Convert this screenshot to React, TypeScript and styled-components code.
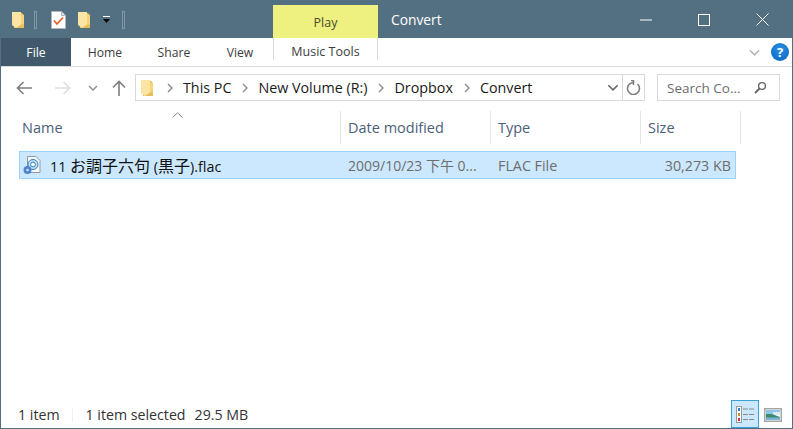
import React from "react";
import styled, { createGlobalStyle } from "styled-components";

const GlobalStyle = createGlobalStyle`
  html, body {
    margin: 0;
    padding: 0;
    background: #fff;
  }
  body {
    font-family: "Open Sans", "Noto Sans CJK JP", sans-serif;
  }
`;

const Window = styled.div`
  width: 793px;
  height: 429px;
  box-sizing: border-box;
  display: flex;
  flex-direction: column;
  background: #fff;
  border: 1px solid #536f82;
  border-top: 0;
  overflow: hidden;
`;

const TitleBar = styled.div`
  height: 38px;
  flex: none;
  background: #536f82;
  display: flex;
  align-items: flex-end;
  margin: 0 -1px;
`;

const QuickAccess = styled.div`
  width: 273px;
  height: 38px;
  display: flex;
  align-items: center;
  padding: 2px 0 0 11px;
  box-sizing: border-box;
`;

const QuickSep = styled.div<{ $left: number }>`
  width: 1px;
  height: 16px;
  margin-left: ${({ $left }) => $left}px;
  border: 1px solid #8496a2;
  background: #536f82;
`;

const IconSlot = styled.span<{ $left: number }>`
  display: flex;
  margin-left: ${({ $left }) => $left}px;
`;

const PlayTab = styled.div`
  width: 105px;
  height: 33px;
  background: #eef07f;
  color: #4b4b30;
  font-size: 12.5px;
  display: flex;
  align-items: center;
  justify-content: center;
  padding-top: 2px;
  box-sizing: border-box;
`;

const WindowTitle = styled.div`
  width: 240px;
  height: 38px;
  padding-left: 13px;
  box-sizing: border-box;
  line-height: 40px;
  color: #fff;
  font-size: 13.8px;
`;

const WindowControls = styled.div`
  flex: 1;
  height: 38px;
  display: flex;
  align-items: center;
  padding-top: 1px;
  box-sizing: border-box;
`;

const ControlSlot = styled.span<{ $left: number }>`
  display: flex;
  margin-left: ${({ $left }) => $left}px;
`;

const Ribbon = styled.div`
  height: 29px;
  flex: none;
  display: flex;
  align-items: stretch;
  border-bottom: 1px solid #dadbdc;
  box-sizing: border-box;
  font-size: 12.2px;
  color: #3c3c3c;
`;

const FileTab = styled.div`
  width: 70px;
  height: 28px;
  background: #415a6b;
  color: #fff;
  display: flex;
  align-items: center;
  justify-content: center;
`;

const RibbonTab = styled.div<{ $width: number }>`
  width: ${({ $width }) => $width}px;
  display: flex;
  align-items: center;
  justify-content: center;
`;

const ToolsTab = styled(RibbonTab)`
  margin-left: 2px;
  height: 22px;
  box-sizing: border-box;
  align-items: flex-start;
  line-height: 28px;
  font-size: 12.5px;
  border-left: 1px solid #dadbdc;
  border-right: 1px solid #dadbdc;
`;

const RibbonRight = styled.div`
  flex: 1;
  display: flex;
  align-items: center;
  justify-content: flex-end;
  gap: 10px;
  padding-right: 3px;
`;

const HelpBadge = styled.span`
  width: 18px;
  height: 18px;
  border-radius: 50%;
  background: radial-gradient(circle at 50% 35%, #2a8fe6, #0a62bd);
  color: #fff;
  font-size: 13px;
  font-weight: 700;
  line-height: 18px;
  text-align: center;
`;

const NavRow = styled.div`
  height: 27px;
  flex: none;
  display: flex;
  align-items: stretch;
  margin-top: 7px;
`;

const NavButtons = styled.div`
  width: 134px;
  display: flex;
  align-items: center;
  flex: none;
`;

const NavIcon = styled.span<{ $left: number }>`
  display: flex;
  margin-left: ${({ $left }) => $left}px;
`;

const AddressBox = styled.div`
  width: 510px;
  box-sizing: border-box;
  border: 1px solid #d9d9d9;
  display: flex;
  align-items: center;
  font-size: 14.3px;
  color: #1a1a1a;
`;

const Crumbs = styled.div`
  flex: 1;
  display: flex;
  align-items: center;
  padding-left: 4px;
`;

const Crumb = styled.span`
  margin-left: 10px;
  white-space: nowrap;
`;

const CrumbArrow = styled.span<{ $left: number }>`
  display: flex;
  margin-left: ${({ $left }) => $left}px;
`;

const AddressEnd = styled.div`
  height: 100%;
  width: 21px;
  border-left: 1px solid #d9d9d9;
  display: flex;
  align-items: center;
  justify-content: center;
`;

const AddressDrop = styled.span`
  display: flex;
  margin-right: 3px;
`;

const SearchBox = styled.div`
  width: 123px;
  margin-left: 12px;
  box-sizing: border-box;
  border: 1px solid #d9d9d9;
  display: flex;
  align-items: center;
  justify-content: space-between;
  padding: 0 12px 0 9px;
  font-size: 13.5px;
  color: #6d6d6d;
`;

const HeaderRow = styled.div`
  height: 33px;
  flex: none;
  margin-top: 10px;
  display: flex;
  font-size: 14.5px;
  color: #4c607a;
  position: relative;
`;

const HeaderCell = styled.div<{ $width: number }>`
  width: ${({ $width }) => $width}px;
  box-sizing: border-box;
  border-right: 1px solid #e5e5e5;
  padding: 8px 0 0 7px;
  line-height: 18px;
`;

const NameHeader = styled(HeaderCell)`
  padding-left: 21px;
`;

const SortCaret = styled.span`
  position: absolute;
  left: 171px;
  top: 1px;
  display: flex;
`;

const FileRow = styled.div`
  width: 717px;
  height: 28px;
  flex: none;
  margin: 7px 0 0 18px;
  box-sizing: border-box;
  display: flex;
  align-items: center;
  background: #cce8ff;
  border: 1px solid #99d1ff;
  font-size: 14.3px;
  color: #6d6d6d;
`;

const NameCell = styled.div`
  width: 328px;
  flex: none;
  display: flex;
  align-items: center;
  padding-left: 3px;
  box-sizing: border-box;
  color: #111;
  font-size: 14.3px;
  gap: 9px;
  white-space: nowrap;
`;

const CjkText = styled.span`
  font-size: 16px;
`;

const DateCell = styled.div`
  width: 150px;
  flex: none;
  font-size: 14px;
  white-space: nowrap;
`;

const TypeCell = styled.div`
  width: 100px;
  flex: none;
`;

const SizeCell = styled.div`
  flex: 1;
  text-align: right;
  padding-right: 4px;
`;

const Spacer = styled.div`
  flex: 1;
`;

const StatusBar = styled.div`
  height: 27px;
  flex: none;
  display: flex;
  align-items: center;
  padding-left: 17px;
  font-size: 14.2px;
  color: #333;
`;

const StatusItem = styled.span`
  white-space: nowrap;
`;

const StatusDivider = styled.span`
  width: 1px;
  height: 14px;
  background: #efefef;
  margin: 0 13px 0 12px;
`;

const StatusSize = styled.span`
  margin-left: 9px;
  white-space: nowrap;
`;

const ViewButtons = styled.div`
  margin-left: auto;
  margin-right: 6px;
  display: flex;
  align-items: flex-end;
  height: 27px;
`;

const ViewButton = styled.span<{ $active?: boolean }>`
  width: ${({ $active }) => ($active ? 28 : 27)}px;
  height: ${({ $active }) => ($active ? 28 : 27)}px;
  flex: none;
  box-sizing: border-box;
  display: flex;
  align-items: center;
  justify-content: center;
  background: ${({ $active }) => ($active ? "#cce8ff" : "transparent")};
  border: 1px solid ${({ $active }) => ($active ? "#3b9fd8" : "transparent")};
`;

const FolderIcon = () => (
  <svg width="14" height="18" viewBox="0 0 14 18">
    <path d="M3 2 H11 L13 4 V17 H3 Z" fill="#e9bd57" />
    <path d="M1 1 H10 V13.500 L5 17 L1 14 Z" fill="#fbe4a4" />
    <path d="M10 4 H13 V13.500 H10 Z" fill="#f5d376" />
  </svg>
);

const CheckDocIcon = () => (
  <svg width="15" height="18" viewBox="0 0 15 18">
    <path d="M.5.5 H10.500 L14.500 4.500 V17.500 H.5 Z" fill="#fff" stroke="#a9b4bb" />
    <path d="M10.500.5 V4.500 H14.500" fill="#dde3e7" stroke="#a9b4bb" />
    <path d="M3 9.500 L6 13 L12 6.500" fill="none" stroke="#e8602c" strokeWidth="1.8" />
  </svg>
);

const QuickDropIcon = () => (
  <svg width="9" height="8" viewBox="0 0 9 8">
    <path d="M1 .5 H8" stroke="#fff" strokeWidth="1" />
    <path d="M1 3 H8 L4.500 7 Z" fill="#000" />
  </svg>
);

const MinimizeIcon = () => (
  <svg width="12" height="2" viewBox="0 0 12 2">
    <path d="M0 1 H12" stroke="#fff" />
  </svg>
);

const MaximizeIcon = () => (
  <svg width="12" height="12" viewBox="0 0 12 12">
    <rect x=".5" y=".5" width="11" height="11" fill="none" stroke="#fff" />
  </svg>
);

const CloseIcon = () => (
  <svg width="13" height="13" viewBox="0 0 13 13">
    <path d="M.5.5 L12.500 12.500 M12.500.5 L.5 12.500" stroke="#fff" />
  </svg>
);

const Chevron = ({ color = "#8a8a8a", width = 10, height = 6 }: { color?: string; width?: number; height?: number }) => (
  <svg width={width} height={height} viewBox="0 0 10 6">
    <path d="M1 1 L5 5 L9 1" fill="none" stroke={color} strokeWidth="1.3" />
  </svg>
);

const ArrowIcon = ({ color, flip }: { color: string; flip?: boolean }) => (
  <svg width="16" height="14" viewBox="0 0 16 14" style={flip ? { transform: "scaleX(-1)" } : undefined}>
    <path d="M7.500 1 L1.500 7 L7.500 13 M1.500 7 H16" fill="none" stroke={color} strokeWidth="1.6" />
  </svg>
);

const UpArrowIcon = () => (
  <svg width="14" height="16" viewBox="0 0 14 16">
    <path d="M1 7.500 L7 1.500 L13 7.500 M7 1.500 V16" fill="none" stroke="#7e7e7e" strokeWidth="1.6" />
  </svg>
);

const CrumbChevron = () => (
  <svg width="6" height="10" viewBox="0 0 6 10">
    <path d="M1 1 L5 5 L1 9" fill="none" stroke="#8a8a8a" strokeWidth="1.4" />
  </svg>
);

const RefreshIcon = () => (
  <svg width="15" height="15" viewBox="0 0 15 15">
    <path d="M11.500 4 A6 6 0 1 1 7 2.500" fill="none" stroke="#7a7a7a" strokeWidth="1.5" />
    <path d="M5 .5 H7.500 V5" fill="none" stroke="#7a7a7a" strokeWidth="1.5" />
  </svg>
);

const SearchIcon = () => (
  <svg width="13" height="13" viewBox="0 0 13 13">
    <circle cx="8" cy="5" r="3.400" fill="none" stroke="#666" strokeWidth="1.4" />
    <path d="M5.500 7.500 L1 12" stroke="#666" strokeWidth="1.8" />
  </svg>
);

const CaretUpIcon = () => (
  <svg width="11" height="6" viewBox="0 0 11 6">
    <path d="M.5 5.500 L5.500 .8 L10.500 5.500" fill="none" stroke="#8a8a8a" />
  </svg>
);

const FlacIcon = () => (
  <svg width="18" height="19" viewBox="0 0 18 19">
    <path d="M4.500.5 H13 L17 4.500 V16.500 H4.500 Z" fill="#f7f9fb" stroke="#8f9aa4" />
    <circle cx="10" cy="8.500" r="5" fill="#bfe0f4" stroke="#2f7fbf" />
    <circle cx="10" cy="8.500" r="2.400" fill="#fff" stroke="#2f7fbf" />
    <circle cx="4.500" cy="14" r="4" fill="#4d84cb" />
    <circle cx="4.500" cy="14" r="1.300" fill="#cfe2f6" />
  </svg>
);

const DetailsViewIcon = () => (
  <svg width="19" height="17" viewBox="0 0 19 17">
    <rect x=".5" y=".5" width="5" height="16" fill="#fff" stroke="#9a9a9a" />
    <rect x="2" y="2" width="2" height="3" fill="#3a7fc0" />
    <rect x="2" y="7" width="2" height="3" fill="#c9902f" />
    <rect x="2" y="12" width="2" height="3" fill="#c8402f" />
    <path d="M7 3 H18 M7 8.500 H18 M7 13.500 H18" stroke="#8a8a8a" strokeDasharray="5 1" />
  </svg>
);

const PreviewViewIcon = () => (
  <svg width="18" height="14" viewBox="0 0 18 14">
    <rect x=".75" y=".75" width="16.500" height="12.500" fill="#fff" stroke="#a6a6a6" strokeWidth="1.500" />
    <rect x="2" y="2" width="14" height="4" fill="#8fc6ea" />
    <rect x="9" y="4" width="7" height="3" fill="#dcecf6" />
    <path d="M2 6 L8 6 L16 9 V10 H2 Z" fill="#3f8a6c" />
    <rect x="2" y="9.500" width="14" height="2.500" fill="#7ab4d6" />
  </svg>
);

const crumbs = ["This PC", "New Volume (R:)", "Dropbox", "Convert"];

const App = () => {
  return (
    <>
      <GlobalStyle />
      <Window>
        <TitleBar>
          <QuickAccess>
            <FolderIcon />
            <QuickSep $left={9} />
            <IconSlot $left={14}>
              <CheckDocIcon />
            </IconSlot>
            <IconSlot $left={11}>
              <FolderIcon />
            </IconSlot>
            <IconSlot $left={11}>
              <QuickDropIcon />
            </IconSlot>
            <QuickSep $left={11} />
          </QuickAccess>
          <PlayTab>Play</PlayTab>
          <WindowTitle>Convert</WindowTitle>
          <WindowControls>
            <ControlSlot $left={22}>
              <MinimizeIcon />
            </ControlSlot>
            <ControlSlot $left={46}>
              <MaximizeIcon />
            </ControlSlot>
            <ControlSlot $left={46}>
              <CloseIcon />
            </ControlSlot>
          </WindowControls>
        </TitleBar>

        <Ribbon>
          <FileTab>File</FileTab>
          <RibbonTab $width={68}>Home</RibbonTab>
          <RibbonTab $width={70}>Share</RibbonTab>
          <RibbonTab $width={62}>View</RibbonTab>
          <ToolsTab $width={105}>Music Tools</ToolsTab>
          <RibbonRight>
            <Chevron color="#b5b5b5" width={13} height={7} />
            <HelpBadge>?</HelpBadge>
          </RibbonRight>
        </Ribbon>

        <NavRow>
          <NavButtons>
            <NavIcon $left={15}>
              <ArrowIcon color="#7e7e7e" />
            </NavIcon>
            <NavIcon $left={23}>
              <ArrowIcon color="#dedede" flip />
            </NavIcon>
            <NavIcon $left={17}>
              <Chevron />
            </NavIcon>
            <NavIcon $left={14}>
              <UpArrowIcon />
            </NavIcon>
          </NavButtons>
          <AddressBox>
            <Crumbs>
              <FolderIcon />
              {crumbs.map((label, i) => (
                <React.Fragment key={label}>
                  <CrumbArrow $left={i === 0 ? 13 : 11}>
                    <CrumbChevron />
                  </CrumbArrow>
                  <Crumb>{label}</Crumb>
                </React.Fragment>
              ))}
            </Crumbs>
            <AddressDrop>
              <Chevron color="#666" width={12} height={7} />
            </AddressDrop>
            <AddressEnd>
              <RefreshIcon />
            </AddressEnd>
          </AddressBox>
          <SearchBox>
            Search Co...
            <SearchIcon />
          </SearchBox>
        </NavRow>

        <HeaderRow>
          <SortCaret>
            <CaretUpIcon />
          </SortCaret>
          <NameHeader $width={340}>Name</NameHeader>
          <HeaderCell $width={150}>Date modified</HeaderCell>
          <HeaderCell $width={150}>Type</HeaderCell>
          <HeaderCell $width={100}>Size</HeaderCell>
        </HeaderRow>

        <FileRow>
          <NameCell>
            <FlacIcon />
            <span>
              11 <CjkText>お調子六句</CjkText> (<CjkText>黒子</CjkText>).flac
            </span>
          </NameCell>
          <DateCell>2009/10/23 下午 0...</DateCell>
          <TypeCell>FLAC File</TypeCell>
          <SizeCell>30,273 KB</SizeCell>
        </FileRow>

        <Spacer />

        <StatusBar>
          <StatusItem>1 item</StatusItem>
          <StatusDivider />
          <StatusItem>1 item selected</StatusItem>
          <StatusSize>29.5 MB</StatusSize>
          <ViewButtons>
            <ViewButton $active>
              <DetailsViewIcon />
            </ViewButton>
            <ViewButton>
              <PreviewViewIcon />
            </ViewButton>
          </ViewButtons>
        </StatusBar>
      </Window>
    </>
  );
};

export default App;
